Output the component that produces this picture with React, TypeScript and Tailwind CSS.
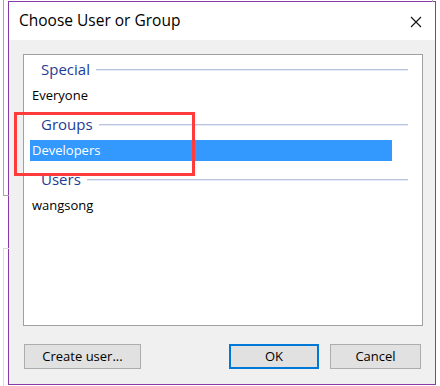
import React from "react";

const font = { fontFamily: '"Open Sans", "Noto Sans", Arial, sans-serif' };

function GroupHeader({ label }: { label: string }) {
  return (
    <div className="flex h-[26px] items-center pl-[17px] pr-[14px]">
      <span className="mt-[-1px] text-[15px] leading-none text-[#1e3c96]">{label}</span>
      <div className="ml-[6px] flex-1 border-t border-b border-t-[#b9c3dd] border-b-[#e6eaf5]" />
    </div>
  );
}

function Item({ label, selected = false }: { label: string; selected?: boolean }) {
  return (
    <div
      className={
        selected
          ? "ml-[6px] mt-[2px] flex h-[21px] w-[362px] items-center bg-[#3399ff] pl-[2px] text-[13px] text-white"
          : "ml-[6px] mt-[2px] flex h-[21px] w-[362px] items-center pl-[2px] text-[13px] text-black"
      }
    >
      {label}
    </div>
  );
}

export default function App() {
  return (
    <div className="relative h-[386px] w-[440px] overflow-hidden bg-white" style={font}>
      {/* window behind the dialog */}
      <div className="absolute left-[3px] top-0 h-[196px] w-[6px] border-l border-b border-[#a6a6a6]" />
      <div className="absolute left-[3px] top-[248px] h-[140px] w-[6px] border-l border-t border-[#dcdcdc]" />
      <div className="absolute left-[432px] top-0 h-[2px] w-[1px] bg-[#a6a6a6]" />

      <div className="ml-[8px] mt-[1px] flex h-[384px] w-[428px] flex-col border border-[#8a3aa6]">
        {/* title bar */}
        <div className="flex h-[38px] items-center justify-between bg-white pl-[10px] pr-[13px]">
          <span className="text-[15.5px] text-black">Choose User or Group</span>
          <svg width="12" height="12" viewBox="0 0 12 12" className="mt-[1px]">
            <path d="M1 1 L11 11 M11 1 L1 11" stroke="#111" strokeWidth="1.1" fill="none" />
          </svg>
        </div>

        {/* body */}
        <div className="flex flex-1 flex-col bg-[#f0f0f0] pl-[14px] pr-[12px] pt-[14px]">
          <div className="h-[272px] w-[400px] border border-[#a0a0a0] bg-white pt-[2px]">
            <GroupHeader label="Special" />
            <Item label="Everyone" />
            <div className="h-[6px]" />
            <GroupHeader label="Groups" />
            <Item label="Developers" selected />
            <div className="h-[6px]" />
            <GroupHeader label="Users" />
            <Item label="wangsong" />
          </div>

          <div className="mt-[18px] flex items-center justify-between pl-[1px] pr-[2px]">
            <button className="h-[25px] w-[117px] border border-[#adadad] bg-[#e1e1e1] text-[13px] text-black">
              Create user...
            </button>
            <div className="flex gap-[11px]">
              <button className="h-[25px] w-[90px] border-2 border-[#0078d7] bg-[#e1e1e1] text-[13px] text-black">
                OK
              </button>
              <button className="h-[25px] w-[91px] border border-[#adadad] bg-[#e1e1e1] text-[13px] text-black">
                Cancel
              </button>
            </div>
          </div>
        </div>
      </div>

      {/* red annotation box */}
      <div className="absolute left-[14px] top-[112px] h-[64px] w-[181px] border-[3px] border-[#ff3b3b]" />
    </div>
  );
}
